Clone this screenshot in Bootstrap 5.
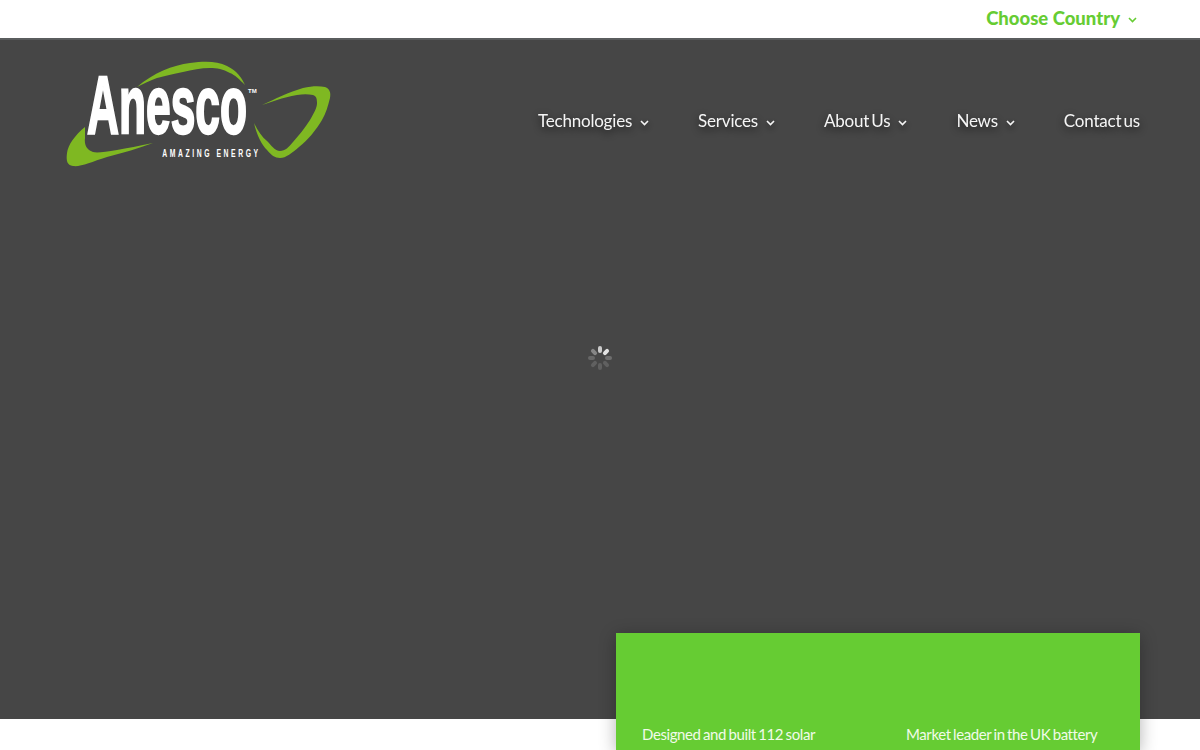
<!DOCTYPE html>
<html lang="en">
<head>
<meta charset="utf-8">
<title>Anesco</title>
<link href="https://cdn.jsdelivr.net/npm/bootstrap@5.3.0/dist/css/bootstrap.min.css" rel="stylesheet">
<style>
html,body{height:750px;overflow:hidden;background:#fff;font-family:Lato,"Liberation Sans",sans-serif}
.topstrip{height:40px;border-bottom:2px solid #5a5d5e;padding-right:63px}
.country{color:#66cc33;font-size:18.5px;font-weight:900;line-height:1;text-decoration:none;margin-top:-1px}
.hero{height:679px;background:#464646;padding:0 60px 0 67px}
.headrow{height:162px;padding-top:21px}
.mainlink{color:#fff;font-size:17px;line-height:24px;text-decoration:none;text-shadow:0 3px 9px rgba(0,0,0,.75);letter-spacing:-.2px;word-spacing:-2px;opacity:.95}
.mainnav{gap:49px;margin-top:-3px;height:126px}
.chev{flex:none;margin-top:3px}
.chev-d{filter:drop-shadow(0 3px 3px rgba(0,0,0,.6))}
.spinner-area{height:393px;padding:143px 7px 0 0}
.spin-img{filter:blur(.7px)}
.panel{width:524px;height:117px;background:#66cc33;box-shadow:0 3px 16px rgba(0,0,0,.3);padding:90px 26px 0;color:#f1fbe9;font-size:15px;line-height:22px;letter-spacing:-.4px;word-spacing:-1px;margin-top:38px}
.panel-first{width:264px;flex:none}
</style>
</head>
<body>
<div class="topstrip d-flex justify-content-end align-items-center">
  <a href="#" class="country d-flex align-items-center gap-2">Choose Country
    <svg class="chev" width="9" height="6" viewBox="0 0 9 6"><path d="M1 1l3.5 3.5L8 1" fill="none" stroke="#66cc33" stroke-width="1.6"/></svg>
  </a>
</div>
<div class="hero">
  <header class="headrow d-flex justify-content-between align-items-start">
    <a href="#" class="d-block" aria-label="Anesco">
      <svg width="266" height="108" viewBox="0 0 266 108" class="d-block overflow-visible">
        <path d="M18 66C8 74 1 84 0 92C-1 100 0 104 6 105C14 106 24 101 40 96C56 92 72 87 86 82C72 85 60 87 50 89C38 91 30 92 26 91C20 89 17 84 18 77Z" fill="#7fb822"/>
        <path d="M70 26C86 12 106 4 123 2C138 0 150 0 160 5C170 10 175 17 178 24C172 18 168 14 163 12C156 8 150 7 143 7C134 7 125 9 116 11C106 13 98 15 90 17C82 20 76 23 70 26Z" fill="#7fb822"/>
        <path d="M195 44C208 38 222 31 236 27C245 25 252 25 258 26C263 28 264 32 263 37C261 45 259 52 255 59C249 69 241 79 232 86C225 92 219 97 213 97C208 97 204 94 200 89C195 84 190 75 187 62C191 70 195 76 200 80C204 84 208 90 213 90C218 90 222 86 226 81C232 74 238 67 243 59C247 52 250 47 250 42C250 37 249 35 246 34C241 33 236 33 230 34C223 35 216 37 210 39C205 41 200 42 195 44Z" fill="#7fb822"/>
        <text x="20" y="72" font-family="'Liberation Sans',sans-serif" font-weight="700" font-size="81" fill="#fff" stroke="#fff" stroke-width="2.4" textLength="160" lengthAdjust="spacingAndGlyphs">Anesco</text>
        <text x="181" y="32" font-family="'Liberation Sans',sans-serif" font-weight="700" font-size="6" fill="#fff">TM</text>
        <text transform="scale(.68 1)" x="140" y="96" font-family="'Liberation Sans',sans-serif" font-weight="700" font-size="10" fill="#fff" textLength="141" lengthAdjust="spacing">AMAZING ENERGY</text>
      </svg>
    </a>
    <nav class="mainnav d-flex align-items-center">
      <a href="#" class="mainlink d-flex align-items-center gap-2">Technologies <svg class="chev chev-d" width="9" height="6" viewBox="0 0 9 6"><path d="M1 1l3.5 3.5L8 1" fill="none" stroke="#fff" stroke-width="1.6"/></svg></a>
      <a href="#" class="mainlink d-flex align-items-center gap-2">Services <svg class="chev chev-d" width="9" height="6" viewBox="0 0 9 6"><path d="M1 1l3.5 3.5L8 1" fill="none" stroke="#fff" stroke-width="1.6"/></svg></a>
      <a href="#" class="mainlink d-flex align-items-center gap-2">About Us <svg class="chev chev-d" width="9" height="6" viewBox="0 0 9 6"><path d="M1 1l3.5 3.5L8 1" fill="none" stroke="#fff" stroke-width="1.6"/></svg></a>
      <a href="#" class="mainlink d-flex align-items-center gap-2">News <svg class="chev chev-d" width="9" height="6" viewBox="0 0 9 6"><path d="M1 1l3.5 3.5L8 1" fill="none" stroke="#fff" stroke-width="1.6"/></svg></a>
      <a href="#" class="mainlink">Contact us</a>
    </nav>
  </header>
  <div class="spinner-area d-flex justify-content-center">
    <svg class="spin-img" width="26" height="26" viewBox="-13 -13 26 26">
      <g fill="#fff">
        <rect x="-2" y="-12" width="4" height="7" rx="2" opacity=".72"/>
        <rect x="-2" y="-12" width="4" height="7" rx="2" opacity=".85" transform="rotate(45)"/>
        <rect x="-2" y="-12" width="4" height="7" rx="2" opacity=".22" transform="rotate(90)"/>
        <rect x="-2" y="-12" width="4" height="7" rx="2" opacity=".14" transform="rotate(135)"/>
        <rect x="-2" y="-12" width="4" height="7" rx="2" opacity=".14" transform="rotate(180)"/>
        <rect x="-2" y="-12" width="4" height="7" rx="2" opacity=".14" transform="rotate(225)"/>
        <rect x="-2" y="-12" width="4" height="7" rx="2" opacity=".18" transform="rotate(270)"/>
        <rect x="-2" y="-12" width="4" height="7" rx="2" opacity=".35" transform="rotate(315)"/>
      </g>
    </svg>
  </div>
  <div class="panel ms-auto d-flex">
    <div class="panel-first">Designed and built 112 solar</div>
    <div class="flex-fill">Market leader in the UK battery</div>
  </div>
</div>
</body>
</html>
